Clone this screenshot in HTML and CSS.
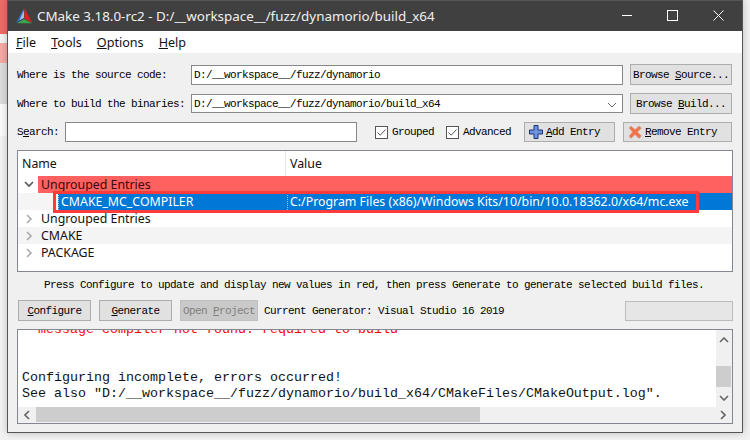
FILE: index.html
```html
<!DOCTYPE html>
<html lang="en">
<head>
<meta charset="utf-8">
<title>CMake</title>
<link rel="stylesheet" href="styles.css">
</head>
<body>
<div class="desktop">
  <div class="backdrop">
    <div class="bd bd-a"></div>
    <div class="bd bd-b"></div>
    <div class="bd bd-c"></div>
    <div class="bd bd-d"></div>
    <div class="bd bd-e"></div>
    <div class="bd bd-f"></div>
  </div>
  <div class="window">
    <div class="titlebar">
      <svg class="logo" width="17" height="16" viewBox="0 0 20 18">
        <polygon points="9,0 0,17 9,12" fill="#2a6cc0"/>
        <polygon points="10,0 10,12 19,17" fill="#e02020"/>
        <polygon points="1,17.5 19,17.5 9.5,12.5" fill="#3aa54a"/>
        <polygon points="9.5,2 4,14 9.5,11" fill="#d8dce8" opacity=".75"/>
      </svg>
      <span class="title">CMake 3.18.0-rc2 - D:/__workspace__/fuzz/dynamorio/build_x64</span>
      <div class="winctl">
        <svg width="12" height="12" viewBox="0 0 12 12"><path d="M1 5.5H11" stroke="#fff" fill="none"/></svg>
        <svg width="12" height="12" viewBox="0 0 12 12"><rect x=".5" y=".5" width="10" height="10" stroke="#fff" fill="none"/></svg>
        <svg width="12" height="12" viewBox="0 0 12 12"><path d="M.5 .5L10.5 10.5M10.5 .5L.5 10.5" stroke="#fff" fill="none"/></svg>
      </div>
    </div>
    <div class="menubar">
      <span><u>F</u>ile</span><span><u>T</u>ools</span><span><u>O</u>ptions</span><span><u>H</u>elp</span>
    </div>
    <div class="content">
      <div class="row row-source">
        <label class="lbl path-lbl">Where is the source code:</label>
        <div class="field path"><span>D:/__workspace__/fuzz/dynamorio</span></div>
        <button class="btn browse">Browse <u>S</u>ource...</button>
      </div>
      <div class="row row-build">
        <label class="lbl path-lbl">Where to build the binaries:</label>
        <div class="field path combo"><span>D:/__workspace__/fuzz/dynamorio/build_x64</span><svg class="chev" width="10" height="6" viewBox="0 0 10 6"><path d="M1 1L5 5L9 1" stroke="#666" fill="none"/></svg></div>
        <button class="btn browse">Browse <u>B</u>uild...</button>
      </div>
      <div class="row row-search">
        <label class="lbl search-lbl">S<u>e</u>arch:</label>
        <div class="field search"></div>
        <div class="check check-grouped">
          <svg class="box" width="13" height="13" viewBox="0 0 13 13"><rect x=".5" y=".5" width="12" height="12" fill="#fff" stroke="#555"/><path d="M2.5 6.5L5.2 9.2L10.5 3.5" stroke="#555" fill="none"/></svg>
          <span class="lbl">Grouped</span>
        </div>
        <div class="check check-advanced">
          <svg class="box" width="13" height="13" viewBox="0 0 13 13"><rect x=".5" y=".5" width="12" height="12" fill="#fff" stroke="#555"/><path d="M2.5 6.5L5.2 9.2L10.5 3.5" stroke="#555" fill="none"/></svg>
          <span class="lbl">Advanced</span>
        </div>
        <button class="btn entry add">
          <svg width="14" height="14" viewBox="0 0 14 14"><path d="M5 .5H9V5H13.5V9H9V13.5H5V9H.5V5H5Z" fill="#6f94dc" stroke="#14307e"/></svg>
          <span><u>A</u>dd Entry</span>
        </button>
        <button class="btn entry remove">
          <svg width="14" height="14" viewBox="0 0 14 14"><path d="M1 3L3 1L7 4.5L11 1L13.5 3L9.5 7L13.5 11L11 13.5L7 9.5L3 13.5L1 11L4.5 7Z" fill="#f0714a" stroke="#d8a898" stroke-width=".7"/></svg>
          <span><u>R</u>emove Entry</span>
        </button>
      </div>
      <div class="tree">
        <div class="thead"><div class="col-name">Name</div><div class="col-value">Value</div></div>
        <div class="trow group-open">
          <svg class="arrow" width="10" height="7" viewBox="0 0 10 7"><path d="M1 1L5 5L9 1" stroke="#555" stroke-width="1.6" fill="none"/></svg>
          <div class="cell-red">Ungrouped Entries</div>
        </div>
        <div class="trow entry-row">
          <div class="sel">
            <div class="sel-name">CMAKE_MC_COMPILER</div>
            <div class="sel-value">C:/Program Files (x86)/Windows Kits/10/bin/10.0.18362.0/x64/mc.exe</div>
          </div>
          <div class="annot"></div>
        </div>
        <div class="trow group">
          <svg class="arrow side" width="7" height="10" viewBox="0 0 7 10"><path d="M1 1L5 5L1 9" stroke="#aaa" stroke-width="1.6" fill="none"/></svg>
          <div class="gname">Ungrouped Entries</div>
        </div>
        <div class="trow group alt">
          <svg class="arrow side" width="7" height="10" viewBox="0 0 7 10"><path d="M1 1L5 5L1 9" stroke="#aaa" stroke-width="1.6" fill="none"/></svg>
          <div class="gname">CMAKE</div>
        </div>
        <div class="trow group">
          <svg class="arrow side" width="7" height="10" viewBox="0 0 7 10"><path d="M1 1L5 5L1 9" stroke="#aaa" stroke-width="1.6" fill="none"/></svg>
          <div class="gname">PACKAGE</div>
        </div>
      </div>
      <div class="hint lbl">Press Configure to update and display new values in red, then press Generate to generate selected build files.</div>
      <div class="row row-actions">
        <button class="btn action"><u>C</u>onfigure</button>
        <button class="btn action"><u>G</u>enerate</button>
        <button class="btn action open" disabled>Open <u>P</u>roject</button>
        <span class="lbl generator">Current Generator: Visual Studio 16 2019</span>
        <div class="progress"></div>
      </div>
      <div class="log">
        <div class="log-main">
          <div class="log-text">
            <div class="log-line err">  message compiler not found. required to build</div>
            <div class="log-line"> </div>
            <div class="log-line"> </div>
            <div class="log-line">Configuring incomplete, errors occurred!</div>
            <div class="log-line">See also "D:/__workspace__/fuzz/dynamorio/build_x64/CMakeFiles/CMakeOutput.log".</div>
          </div>
          <div class="vscroll">
            <svg width="10" height="6" viewBox="0 0 10 6"><path d="M1 5L5 1L9 5" stroke="#666" stroke-width="1.6" fill="none"/></svg>
            <div class="vtrack"><div class="vthumb"></div></div>
            <svg width="10" height="6" viewBox="0 0 10 6"><path d="M1 1L5 5L9 1" stroke="#666" stroke-width="1.6" fill="none"/></svg>
          </div>
        </div>
        <div class="hscroll">
          <svg width="6" height="10" viewBox="0 0 6 10"><path d="M5 1L1 5L5 9" stroke="#666" stroke-width="1.6" fill="none"/></svg>
          <div class="htrack"><div class="hthumb"></div></div>
          <svg width="6" height="10" viewBox="0 0 6 10"><path d="M1 1L5 5L1 9" stroke="#666" stroke-width="1.6" fill="none"/></svg>
        </div>
      </div>
    </div>
  </div>
</div>
</body>
</html>
```
FILE: styles.css
```css
* { box-sizing: border-box; }
html, body { margin: 0; padding: 0; }
body { width: 750px; height: 440px; overflow: hidden; background: #f1f1f1; }
.desktop { display: flex; align-items: flex-start; }
.backdrop { width: 7px; height: 440px; display: flex; flex-direction: column; flex: none; }
.bd { width: 7px; }
.bd-a { height: 34px; background: #f06a66; }
.bd-b { height: 9px; background: #f2f2f2; }
.bd-c { height: 20px; background: #f4a9a5; }
.bd-d { height: 41px; background: #dcdcdc; }
.bd-e { height: 32px; background: #fafafa; }
.bd-f { flex: 1; background: #f1f1f1; }

.window { width: 736px; height: 433px; border: 1px solid #555; background: #f0f0f0; flex: none; box-shadow: 0 0 7px rgba(0,0,0,.22); display: flex; flex-direction: column; }

.titlebar { height: 30px; background: #404040; display: flex; align-items: center; padding-left: 8px; color: #f0f0f0; font: 13.4px "Noto Sans", sans-serif; flex: none; }
.logo { flex: none; margin-right: 4px; }
.title { white-space: nowrap; }
.winctl { margin-left: auto; display: flex; gap: 34px; padding-right: 17px; align-items: center; }
.winctl svg { display: block; }

.menubar { height: 22px; background: #fff; display: flex; align-items: center; padding-left: 8px; gap: 15px; font: 12.6px "Noto Sans", sans-serif; color: #111; flex: none; }

.content { flex: 1; padding: 0 9px; display: flex; flex-direction: column; }
.lbl, .field, .btn { font-family: "Liberation Mono", monospace; font-size: 11px; letter-spacing: -.6px; color: #000; white-space: pre; }
.row { display: flex; align-items: center; flex: none; }
.row-source { height: 21px; margin-top: 11px; }
.row-build { height: 21px; margin-top: 8px; }
.row-search { height: 20px; margin-top: 8px; }
.path-lbl { width: 174px; flex: none; }
.field { background: #fff; border: 1px solid #888; display: flex; align-items: center; }
.path { width: 432px; height: 20px; padding-left: 2px; flex: none; margin-right: 7px; }
.combo { position: relative; height: 19px; }
.chev { position: absolute; right: 5px; top: 7px; }
.btn { background: #e1e1e1; border: 1px solid #adadad; padding: 0; display: flex; align-items: center; justify-content: center; height: 21px; }
.browse { width: 102px; flex: none; }
.search-lbl { width: 48px; flex: none; }
.search { width: 292px; height: 20px; flex: none; }
.check { display: flex; align-items: center; gap: 4px; flex: none; }
.box { flex: none; }
.check-grouped { margin-left: 18px; width: 71px; }
.check-advanced { width: 78px; }
.entry { height: 20px; flex: none; gap: 3px; justify-content: flex-start; padding-left: 4px; }
.add { width: 91px; }
.remove { width: 109px; margin-left: 8px; }
.entry svg { flex: none; }

.tree { height: 122px; margin-top: 8px; border: 1px solid #828790; background: #fff; flex: none; font: 12.35px "Noto Sans", sans-serif; color: #111; display: flex; flex-direction: column; }
.thead { height: 25px; display: flex; align-items: center; flex: none; }
.col-name { width: 268px; padding-left: 4px; border-right: 1px solid #e5e5e5; height: 100%; display: flex; align-items: center; flex: none; }
.col-value { padding-left: 4px; }
.trow { height: 17px; display: flex; align-items: center; position: relative; flex: none; }
.arrow { flex: none; margin-left: 6px; width: 10px; }
.side { width: 7px; margin-left: 8px; margin-right: 3px; }
.cell-red { background: #ff6060; flex: 1; height: 17px; margin-left: 4px; padding-left: 3px; line-height: 17px; color: #3a0a0a; }
.gname { margin-left: 5px; }
.alt { background: #f4f4f4; }
.entry-row { background: #f5f5f5; padding-left: 40px; }
.sel { flex: 1; height: 17px; background: #0078d7; color: #fff; display: flex; align-items: center; }
.sel-name { width: 230px; height: 17px; padding-left: 2px; line-height: 17px; flex: none; border: 1px dotted #9cc4e8; border-width: 0 1px 0 1px; }
.sel-value { padding-left: 2px; white-space: nowrap; }
.annot { position: absolute; left: 35px; top: -2px; width: 646px; height: 22px; border: 3px solid #ff3b3b; }

.hint { height: 25px; flex: none; display: flex; align-items: center; padding-left: 27px; }
.row-actions { height: 21px; margin-top: 3px; }
.action { height: 21px; width: 73px; margin-left: 1px; margin-right: 7px; flex: none; }
.open { width: 78px; background: #c9c9c9; border-color: #c0c0c0; color: #808080; margin-right: 6px; }
.generator { flex: none; }
.progress { margin-left: auto; width: 108px; height: 20px; background: #e6e6e6; border: 1px solid #bcbcbc; flex: none; }

.log { height: 95px; margin-top: 8px; border: 1px solid #828790; background: #f0f0f0; flex: none; display: flex; flex-direction: column; overflow: hidden; }
.log-main { height: 77px; display: flex; flex: none; }
.log-text { flex: 1; background: #fff; padding-left: 4px; overflow: hidden; font: 13.33px/16px "Liberation Mono", monospace; color: #111; }
.log-line { height: 16px; position: relative; top: -8px; white-space: pre; }
.err { color: #ff0000; }
.vscroll { width: 16px; flex: none; display: flex; flex-direction: column; align-items: center; justify-content: space-between; padding: 7px 0 6px; }
.vscroll svg { flex: none; }
.vtrack { width: 100%; flex: 1; padding-top: 23px; }
.vthumb { width: 15px; height: 21px; background: #cdcdcd; }
.hscroll { height: 15px; display: flex; align-items: center; flex: none; }
.hscroll svg { flex: none; margin: 0 6px; }
.htrack { flex: 1; height: 100%; }
.hthumb { width: 444px; height: 100%; background: #cdcdcd; }
```
